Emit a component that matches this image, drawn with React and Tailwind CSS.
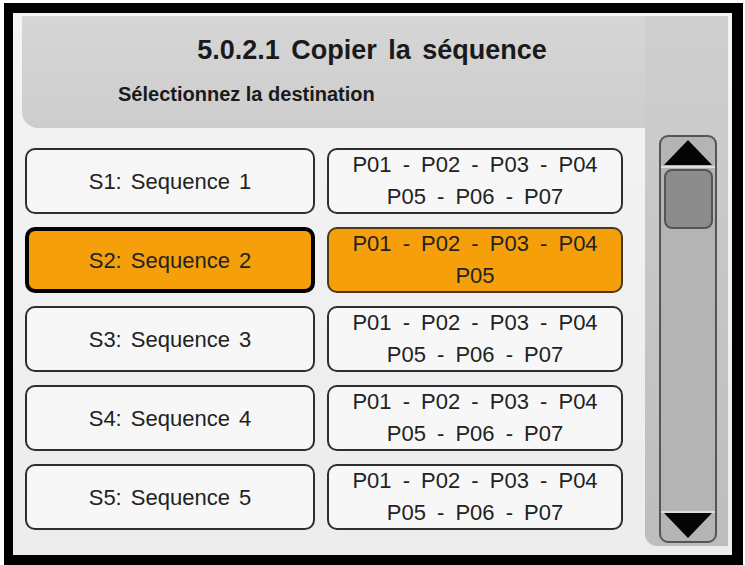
import React from "react";

const rows = [
    { name: "S1: Sequence 1", steps: ["P01 - P02 - P03 - P04", "P05 - P06 - P07"] },
    { name: "S2: Sequence 2", steps: ["P01 - P02 - P03 - P04", "P05"], active: true },
    { name: "S3: Sequence 3", steps: ["P01 - P02 - P03 - P04", "P05 - P06 - P07"] },
    { name: "S4: Sequence 4", steps: ["P01 - P02 - P03 - P04", "P05 - P06 - P07"] },
    { name: "S5: Sequence 5", steps: ["P01 - P02 - P03 - P04", "P05 - P06 - P07"] },
];

function Row({ row }) {
    return (
        <div className="flex gap-[12px] h-[66px]">
            <div className={row.active
                ? "w-[290px] flex items-center justify-center rounded-[10px] border-[4px] border-black bg-[#f5a00a] text-[22px] text-[#222] [word-spacing:3px]"
                : "w-[290px] flex items-center justify-center rounded-[10px] border-2 border-[#2e2e2e] bg-[#f7f7f7] text-[22px] text-[#222] [word-spacing:3px]"}>
                {row.name}
            </div>
            <div className={row.active
                ? "w-[296px] flex flex-col items-center justify-center rounded-[10px] border-2 border-[#4a3a1a] bg-[#f5a00a] text-[22px] leading-[32px] text-[#222] [word-spacing:5px]"
                : "w-[296px] flex flex-col items-center justify-center rounded-[10px] border-2 border-[#2e2e2e] bg-[#f7f7f7] text-[22px] leading-[32px] text-[#222] [word-spacing:5px]"}>
                {row.steps.map((s, i) => <span key={i}>{s}</span>)}
            </div>
        </div>
    )
}

export default function App() {
    return (
        <div className="w-[745px] h-[565px] bg-white pt-[3px] pl-[4px] font-['Liberation_Sans',Arial,sans-serif]">
            <div className="w-[739px] h-[562px] bg-black pt-[10px] pl-[9px] pr-[11px] pb-[10px]">
                <div className="w-full h-full bg-gradient-to-b from-[#f4f4f4] to-[#ececec] flex pt-[3px] pl-[9px] pr-[4px]">

                    <div className="w-[623px] flex flex-col">
                        <div className="h-[112px] rounded-bl-[16px] bg-gradient-to-b from-[#d6d6d6] to-[#cdcdcd] flex flex-col">
                            <h1 className="mt-[18px] pl-[77px] text-center text-[27px] leading-[32px] font-bold text-[#1a1a1a] [word-spacing:4px]">5.0.2.1 Copier la séquence</h1>
                            <p className="mt-[16px] pl-[96px] text-[20px] leading-[24px] font-semibold text-[#1a1a1a]">Sélectionnez la destination</p>
                        </div>

                        <div className="flex flex-col gap-[13px] mt-[20px] pl-[3px]">
                            {rows.map(r => <Row key={r.name} row={r} />)}
                        </div>
                    </div>

                    <div className="w-[83px] h-[530px] rounded-bl-[12px] bg-gradient-to-b from-[#cfcfcf] to-[#bdbdbd] pt-[119px] pl-[14px] pr-[11px] pb-[3px]">
                        <div className="h-full rounded-[9px] border-2 border-[#555] bg-[#b4b4b4] flex flex-col">
                            <div className="h-[31px] flex items-end justify-center border-b-2 border-[#dedede] pb-[1px]">
                                <svg width="48" height="25" viewBox="0 0 48 25"><polygon points="24,0 48,25 0,25" fill="#050505" /></svg>
                            </div>
                            <div className="mt-[1px] ml-[3px] mr-[2px] h-[60px] rounded-[8px] border-2 border-[#555] bg-[#8c8c8c]"></div>
                            <div className="flex-1"></div>
                            <div className="h-[30px] flex items-start justify-center border-t-2 border-[#dedede] pb-[3px]">
                                <svg width="48" height="25" viewBox="0 0 48 25"><polygon points="0,0 48,0 24,25" fill="#050505" /></svg>
                            </div>
                        </div>
                    </div>

                </div>
            </div>
        </div>
    )
}
